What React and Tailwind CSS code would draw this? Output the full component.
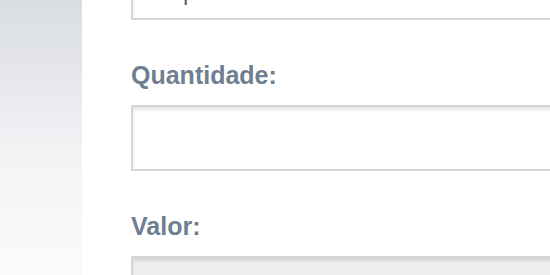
const FIELD =
  'block w-[520px] h-[66px] border-2 border-[#d6d6d6] shadow-[inset_0_3px_3px_rgba(0,0,0,0.09)] outline-none text-[24px] text-[#666] px-[10px]'

function Label({ children }) {
  return (
    <label className="block text-[25px] leading-[28px] font-bold text-[#6f7e90] mt-[41px] mb-[16px]">
      {children}
    </label>
  )
}

export default function App() {
  return (
    <div
      className="flex w-[550px] h-[275px] overflow-hidden bg-white"
      style={{ fontFamily: '"Liberation Sans", Arial, sans-serif' }}
    >
      {/* sidebar */}
      <aside className="w-[82px] shrink-0 bg-gradient-to-b from-[#d9dce2] via-[#f2f3f5] via-55% to-[#fbfbfb]" />

      {/* form */}
      <main className="flex-1 pl-[49px]">
        <div className="-mt-[46px]">
          <input readOnly value="Grupo" className={`${FIELD} bg-white pt-[10px]`} />
        </div>

        <Label>Quantidade:</Label>
        <input readOnly value="" className={`${FIELD} bg-white`} />

        <Label>Valor:</Label>
        <input readOnly value="" className={`${FIELD} bg-[#eeeeee]`} />
      </main>
    </div>
  )
}
